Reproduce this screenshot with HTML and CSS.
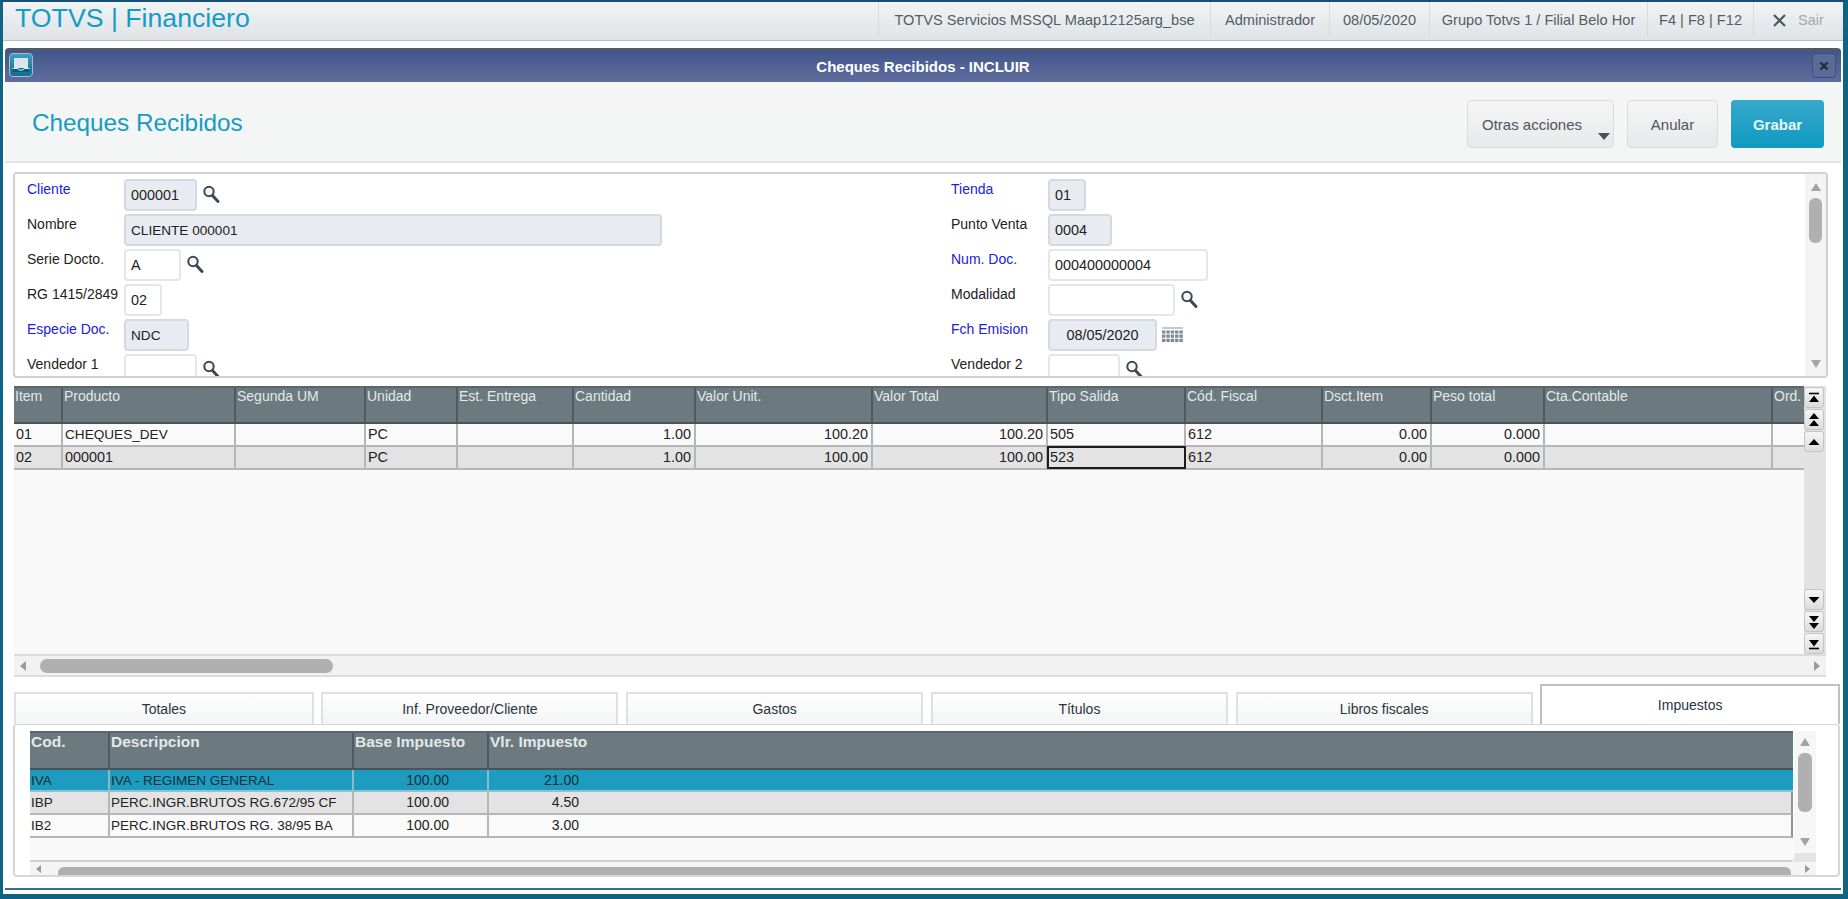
FILE: index.html
```html
<!DOCTYPE html>
<html lang="es">
<head>
<meta charset="utf-8">
<title>Cheques Recibidos - INCLUIR</title>
<link rel="stylesheet" href="styles.css">
</head>
<body>
<svg class="defs" width="0" height="0" aria-hidden="true">
  <symbol id="lupa" viewBox="0 0 18 18">
    <circle cx="7" cy="6.5" r="4.7" fill="#f4f6f8" stroke="#3c4856" stroke-width="2"/>
    <path d="M10.5 10.5 L16 16.5" stroke="#3c4856" stroke-width="3" stroke-linecap="round"/>
  </symbol>
</svg>
<div class="app">
  <header class="topbar">
    <div class="brand">TOTVS | Financiero</div>
    <nav class="status">
      <span class="seg seg-server">TOTVS Servicios MSSQL Maap12125arg_bse</span>
      <span class="seg seg-user">Administrador</span>
      <span class="seg seg-date">08/05/2020</span>
      <span class="seg seg-group">Grupo Totvs 1 / Filial Belo Hor</span>
      <span class="seg seg-keys">F4 | F8 | F12</span>
      <span class="seg seg-exit">
        <svg class="exit-x" width="15" height="15" viewBox="0 0 15 15"><path d="M2 2 L13 13 M13 2 L2 13" stroke="#4c5560" stroke-width="2.2"/></svg>
        <span class="exit-text">Sair</span>
      </span>
    </nav>
  </header>
  <main class="window">
    <div class="titlebar">
      <span class="win-icon">
        <svg width="20" height="20" viewBox="0 0 20 20">
          <rect x="3" y="3" width="14" height="10" fill="#dbe6ec"/>
          <path d="M1.5 13.5 H18.5 V17 H1.5 Z" fill="#0b5a7a"/>
          <path d="M1.5 13.5 H7 L8 15 H12 L13 13.5 H18.5" fill="none" stroke="#e6eef2" stroke-width="1"/>
        </svg>
      </span>
      <span class="win-title">Cheques Recibidos - INCLUIR</span>
      <span class="win-close">
        <svg width="10" height="10" viewBox="0 0 10 10"><path d="M1.5 1.5 L8.5 8.5 M8.5 1.5 L1.5 8.5" stroke="#232a3a" stroke-width="2.2"/></svg>
      </span>
    </div>
    <div class="pagehead">
      <h1 class="page-title">Cheques Recibidos</h1>
      <div class="actions">
        <button class="btn btn-more">Otras acciones<i class="caret"></i></button>
        <button class="btn btn-cancel">Anular</button>
        <button class="btn btn-save">Grabar</button>
      </div>
    </div>
    <section class="form">
      <div class="form-body">
        <div class="col col-left">
          <div class="row"><label class="req">Cliente</label><span class="inp ro w73">000001</span><svg class="lupa"><use href="#lupa"/></svg></div>
          <div class="row"><label>Nombre</label><span class="inp ro w538 text">CLIENTE 000001</span></div>
          <div class="row"><label>Serie Docto.</label><span class="inp w57">A</span><svg class="lupa"><use href="#lupa"/></svg></div>
          <div class="row"><label>RG 1415/2849</label><span class="inp w38">02</span></div>
          <div class="row"><label class="req">Especie Doc.</label><span class="inp ro w65 text">NDC</span></div>
          <div class="row"><label>Vendedor 1</label><span class="inp w73"></span><svg class="lupa"><use href="#lupa"/></svg></div>
        </div>
        <div class="col col-right">
          <div class="row"><label class="req">Tienda</label><span class="inp ro w38">01</span></div>
          <div class="row"><label>Punto Venta</label><span class="inp ro w64">0004</span></div>
          <div class="row"><label class="req">Num. Doc.</label><span class="inp w160">000400000004</span></div>
          <div class="row"><label>Modalidad</label><span class="inp w127"></span><svg class="lupa"><use href="#lupa"/></svg></div>
          <div class="row"><label class="req">Fch Emision</label><span class="inp ro w109 centered">08/05/2020</span>
            <svg class="cal" width="21" height="18" viewBox="0 0 21 18"><path d="M0 1 H21" stroke="#9aa3ad" stroke-width="1.2"/><path d="M0 5 H21 M0 9.2 H21 M0 13.4 H21" stroke="#7d8995" stroke-width="3.2" stroke-dasharray="3.4 .95"/></svg>
          </div>
          <div class="row"><label>Vendedor 2</label><span class="inp w72"></span><svg class="lupa"><use href="#lupa"/></svg></div>
        </div>
      </div>
      <div class="vscroll">
        <i class="tri up"></i>
        <i class="thumb"></i>
        <i class="tri down"></i>
      </div>
    </section>
    <section class="browse">
      <div class="browse-main">
        <div class="grid">
          <div class="gr gh g1">
            <span>Item</span><span>Producto</span><span>Segunda UM</span><span>Unidad</span><span>Est. Entrega</span><span>Cantidad</span><span>Valor Unit.</span><span>Valor Total</span><span>Tipo Salida</span><span>Cód. Fiscal</span><span>Dsct.Item</span><span>Peso total</span><span>Cta.Contable</span><span>Ord.</span>
          </div>
          <div class="gr g1 odd">
            <span>01</span><span class="txt">CHEQUES_DEV</span><span></span><span>PC</span><span></span><span class="n">1.00</span><span class="n">100.20</span><span class="n">100.20</span><span>505</span><span>612</span><span class="n">0.00</span><span class="n">0.000</span><span></span><span></span>
          </div>
          <div class="gr g1 even">
            <span>02</span><span>000001</span><span></span><span>PC</span><span></span><span class="n">1.00</span><span class="n">100.00</span><span class="n">100.00</span><span class="focus">523</span><span>612</span><span class="n">0.00</span><span class="n">0.000</span><span></span><span></span>
          </div>
        </div>
        <div class="hscroll">
          <i class="tri left"></i>
          <i class="hthumb"></i>
          <i class="tri right"></i>
        </div>
      </div>
      <div class="navcol">
        <div class="navgroup">
          <b class="nav"><svg width="12" height="12" viewBox="0 0 12 12"><path d="M1 1.5 H11" stroke="#000" stroke-width="1.6"/><path d="M6 3.5 L11 10 H1 Z"/></svg></b>
          <b class="nav"><svg width="12" height="14" viewBox="0 0 12 14"><path d="M6 0 L11 6 H1 Z M6 7 L11 13 H1 Z"/></svg></b>
          <b class="nav"><svg width="12" height="8" viewBox="0 0 12 8"><path d="M6 1 L11.5 7 H.5 Z"/></svg></b>
        </div>
        <div class="navgroup">
          <b class="nav"><svg width="12" height="8" viewBox="0 0 12 8"><path d="M6 7 L11.5 1 H.5 Z"/></svg></b>
          <b class="nav"><svg width="12" height="14" viewBox="0 0 12 14"><path d="M6 7 L11 1 H1 Z M6 14 L11 8 H1 Z"/></svg></b>
          <b class="nav"><svg width="12" height="12" viewBox="0 0 12 12"><path d="M1 10.5 H11" stroke="#000" stroke-width="1.6"/><path d="M6 8.5 L11 2 H1 Z"/></svg></b>
        </div>
      </div>
    </section>
    <section class="tabs">
      <div class="tablist">
        <span class="tab tab-first">Totales</span>
        <span class="tab">Inf. Proveedor/Cliente</span>
        <span class="tab">Gastos</span>
        <span class="tab">Títulos</span>
        <span class="tab">Libros fiscales</span>
        <span class="tab active">Impuestos</span>
      </div>
      <div class="tabpanel">
        <div class="tax">
          <div class="tax-main">
            <div class="gr gh g2 bold">
              <span>Cod.</span><span>Descripcion</span><span>Base Impuesto</span><span>Vlr. Impuesto</span>
            </div>
            <div class="gr g2 sel"><span>IVA</span><span>IVA - REGIMEN GENERAL</span><span class="n n-base">100.00</span><span class="n n-val">21.00</span></div>
            <div class="gr g2 even"><span>IBP</span><span>PERC.INGR.BRUTOS RG.672/95 CF</span><span class="n n-base">100.00</span><span class="n n-val">4.50</span></div>
            <div class="gr g2 odd"><span>IB2</span><span>PERC.INGR.BRUTOS RG. 38/95 BA</span><span class="n n-base">100.00</span><span class="n n-val">3.00</span></div>
            <div class="tax-empty"></div>
          </div>
          <div class="tax-v">
            <i class="tri up"></i>
            <i class="thumb t2"></i>
            <i class="tri down"></i>
            <i class="corner"></i>
          </div>
        </div>
        <div class="tax-h">
          <i class="tri left small"></i>
          <i class="hthumb2"></i>
          <i class="tri right small"></i>
        </div>
      </div>
    </section>
  </main>
</div>
</body>
</html>
```
FILE: styles.css
```css
* { box-sizing: border-box; }
html, body { margin: 0; height: 100%; overflow: hidden; }
body { font-family: "Liberation Sans", Arial, sans-serif; font-size: 14px; color: #222; background: #fff; }
.defs { position: absolute; }
.app { width: 1848px; height: 899px; display: flex; flex-direction: column; background: #fff; border-top: 2px solid #16507a; border-left: 3px solid #0f6384; border-right: 5px solid #0f6384; border-bottom: 5px solid #0f6384; }

/* top bar */
.topbar { height: 39px; flex: none; display: flex; justify-content: space-between; align-items: stretch; background: linear-gradient(#f2f4f5, #dfe3e6); border-bottom: 1px solid #b9bdc0; }
.brand { font-size: 26.7px; color: #149cc4; padding-left: 12px; line-height: 33px; }
.status { display: flex; color: #555c66; font-size: 14.6px; }
.seg { display: flex; align-items: center; justify-content: center; border-left: 1px solid #d9dcdf; height: 36px; }
.seg-server { width: 332px; }
.seg-user { width: 119px; }
.seg-date { width: 100px; }
.seg-group { width: 218px; }
.seg-keys { width: 106px; }
.seg-exit { width: 90px; gap: 11px; justify-content: flex-start; padding-left: 18px; }
.exit-text { color: #a3a9ae; }

.window { flex: 1; margin: 7px 2px 4px 2px; display: flex; flex-direction: column; background: #fff; border-bottom: 2px solid #3b6f8f; border-radius: 4px 4px 0 0; }

/* title bar */
.titlebar { position: relative; height: 34px; flex: none; display: flex; align-items: center; justify-content: center; background: linear-gradient(#42568b, #5f6d9d); border-top: 2px solid #55595f; border-radius: 4px 4px 0 0; }
.win-title { color: #fff; font-size: 15px; font-weight: bold; }
.win-icon { position: absolute; left: 4px; top: 3px; width: 24px; height: 24px; display: flex; align-items: center; justify-content: center; border: 1px solid #a8bccb; border-radius: 4px; background: linear-gradient(#3ba0bf, #0e6f92); }
.win-close { position: absolute; right: 5px; top: 3px; width: 24px; height: 25px; display: flex; align-items: center; justify-content: center; border: 1px solid #3c4e80; border-radius: 4px; background: #5b6a97; }

/* page head */
.pagehead { height: 81px; flex: none; display: flex; align-items: center; justify-content: space-between; padding: 0 17px 0 27px; background: #f4f5f5; border-bottom: 2px solid #e3e4e4; }
.page-title { margin: 3px 0 0; font-size: 24.3px; font-weight: normal; color: #149cc4; }
.actions { display: flex; gap: 13px; margin-top: 5px; }
.btn { height: 48px; font: 15px "Liberation Sans", Arial, sans-serif; border: 1px solid #dadcdd; border-radius: 4px; background: linear-gradient(#f4f5f5, #e8e9ea); color: #4d5560; padding: 0; }
.btn-more { position: relative; width: 147px; text-align: left; padding-left: 14px; }
.btn-cancel { width: 91px; }
.btn-save { width: 93px; border: 0; color: #e8f6fa; font-weight: bold; background: linear-gradient(#37a9ca, #0f9ac0); }
.caret { position: absolute; right: 3px; bottom: 7px; border: 6px solid transparent; border-top: 7px solid #4a4f5c; border-bottom: 0; }

/* form */
.form { height: 206px; flex: none; margin: 9px 0 0 8px; width: 1815px; display: flex; border: 2px solid #cfd0d0; border-radius: 4px; overflow: hidden; background: #fff; }
.form-body { flex: 1; display: flex; padding-top: 5px; overflow: hidden; }
.col { flex: none; }
.col-left { width: 936px; padding-left: 12px; }
.col-right { flex: 1; }
.row { display: flex; align-items: flex-start; height: 35px; }
.row label { flex: none; width: 97px; padding-top: 2px; line-height: 16px; }
.req { color: #2020e0; }
.inp { flex: none; display: flex; align-items: center; height: 32px; padding-left: 5px; border: 2px solid #e4e6e8; border-radius: 4px; background: #fff; color: #222; font-size: 14.4px; }
.ro { background: #e8ebf2; border-color: #d6d9de; }
.text { font-size: 13.6px; }
.centered { justify-content: center; padding-left: 0; }
.w73 { width: 73px; } .w538 { width: 538px; } .w57 { width: 57px; } .w38 { width: 38px; } .w65 { width: 65px; }
.w64 { width: 64px; } .w160 { width: 160px; } .w127 { width: 127px; } .w109 { width: 109px; } .w72 { width: 72px; }
.lupa { flex: none; width: 18px; height: 18px; margin: 6px 0 0 5px; }
.cal { flex: none; margin: 8px 0 0 5px; }
.vscroll { flex: none; width: 21px; display: flex; flex-direction: column; align-items: center; background: #f4f4f4; padding-top: 9px; }
.tri { display: block; flex: none; width: 0; height: 0; border: 5px solid transparent; }
.tri.up { border-bottom: 8px solid #a3a3a3; border-top: 0; }
.tri.down { border-top: 8px solid #a3a3a3; border-bottom: 0; margin-top: auto; margin-bottom: 8px; }
.tri.left { border-right: 6px solid #9a9a9a; border-left: 0; }
.tri.right { border-left: 6px solid #9a9a9a; border-right: 0; margin-left: auto; }
.thumb { display: block; width: 13px; height: 45px; margin-top: 7px; background: #b0b0b0; border-radius: 6px; }

/* browse */
.browse { height: 291px; flex: none; display: flex; margin: 8px 0 0 9px; width: 1812px; }
.browse-main { width: 1790px; flex: none; display: flex; flex-direction: column; }
.grid { flex: 1; background: #f9f9f9; }
.gr { display: grid; }
.gr > span { display: block; padding: 0 2px; white-space: nowrap; overflow: hidden; border-right: 2px solid #b4b6b7; }
.g1 { grid-template-columns: 49px 173px 130px 92px 116px 122px 177px 175px 138px 137px 109px 113px 228px 31px; }
.g1.odd, .g1.even { font-size: 14.4px; }
.g1 > .txt { font-size: 13.6px; }
.gh { height: 38px; background: #6c7a7f; border-top: 2px solid #5a666b; border-bottom: 2px solid #4a5458; color: #e3e8ea; line-height: 17px; }
.gh > span { border-right: 2px solid #4d5a60; padding-top: 0; padding-left: 1px; }
.odd, .even { height: 23px; line-height: 21px; border-bottom: 2px solid #b4b6b7; }
.odd { background: #fafafa; }
.even { background: #e3e3e3; }
.gr > span:last-child { border-right: 0; }
.gr.odd > span, .gr.even > span { height: 21px; }
.n { text-align: right; padding-right: 3px !important; font-size: 14.4px; }
.gr > .focus { border: 2px solid #1c1c1c; height: 23px !important; margin: -1px 0 -1px -1px; line-height: 18px; padding-left: 1px; }
.hscroll { height: 23px; flex: none; display: flex; align-items: center; padding: 0 6px; margin-right: -22px; background: #f2f2f2; border-top: 2px solid #dcdcdc; border-bottom: 2px solid #dcdcdc; }
.hthumb { display: block; height: 14px; width: 293px; margin-left: 14px; background: #b0b0b0; border-radius: 7px; }
.navcol { width: 22px; flex: none; height: 268px; display: flex; flex-direction: column; justify-content: space-between; align-items: flex-start; background: #e2e2e2; padding-top: 1px; }
.navgroup { display: flex; flex-direction: column; gap: 1px; }
.nav { display: flex; align-items: center; justify-content: center; width: 20px; height: 21px; border: 1px solid #c4c4c4; border-radius: 3px; background: linear-gradient(#f6f6f6, #dcdcdc); }

/* tabs */
.tabs { margin: 7px 0 0 8px; width: 1827px; flex: 1; display: flex; flex-direction: column; }
.tablist { display: flex; gap: 7.6px; align-items: flex-end; height: 40px; flex: none; padding-left: 1px; }
.tab { width: 297.4px; height: 32px; display: flex; align-items: center; justify-content: center; background: linear-gradient(#fff, #f3f4f4); border: 2px solid #dfe0e0; border-bottom: 0; color: #2a3440; }
.tab-first { width: 300px; }
.tab.active { width: 300px; height: 40px; background: #fff; border-color: #bfc0c0; padding-bottom: 0; }
.tabpanel { height: 153px; flex: none; padding: 6px 0 0 15px; border: 2px solid #d6d6d6; border-top-width: 1px; border-radius: 4px; background: #fff; }
.tax { display: flex; height: 131px; }
.tax-main { width: 1763px; flex: none; display: flex; flex-direction: column; background: #f9f9f9; border-bottom: 2px solid #d0d0d0; font-size: 13.5px; }
.g2 { grid-template-columns: 80px 244px 135px 1fr; }
.g2 > span { padding-left: 1px; }
.bold { font-weight: bold; font-size: 15.5px; }
.g2.gh { height: 39px; }
.g2 > .n { font-size: 14px; }
.n-base { padding-right: 38px !important; }
.n-val { width: 93px; border-right: 0 !important; }
.sel { height: 22px; line-height: 21px; background: #1d9cc0; border-bottom: 2px solid #8ec2d3; color: #10303d; }
.sel > span { border-right-color: #8ab9c9; height: 20px; }
.g2.even, .g2.odd { border-right: 2px solid #8f9192; }
.tax-empty { flex: 1; }
.tax-v { width: 22px; flex: none; margin-left: 1px; display: flex; flex-direction: column; align-items: center; background: #f6f6f6; padding-top: 7px; position: relative; }
.t2 { height: 59px; width: 14px; margin-top: 7px; }
.tax-v .tri.down { margin-bottom: 16px; }
.corner { position: absolute; left: 0; right: 0; bottom: 0; height: 9px; background: #e4e4e4; }
.tax-h { display: flex; align-items: center; height: 13px; width: 1786px; padding: 0 6px; background: #f4f4f4; }
.hthumb2 { display: block; flex: 1; height: 8px; margin: 0 14px 0 17px; background: #b0b0b0; border-radius: 6px 6px 0 0; align-self: flex-end; }
.small { border-width: 4px; }
.tri.left.small { border-right-width: 5px; }
.tri.right.small { border-left-width: 5px; }
```
